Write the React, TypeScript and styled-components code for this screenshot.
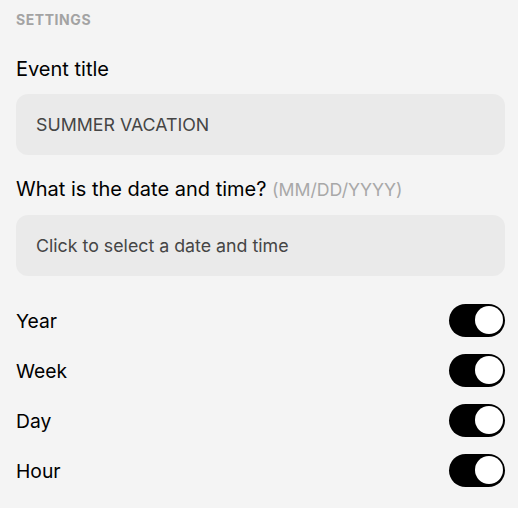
import React, { useState } from "react";
import styled, { createGlobalStyle } from "styled-components";

const Global = createGlobalStyle`
  html, body { margin: 0; padding: 0; background: #f4f4f4; }
  body { font-family: Inter, "Noto Sans", sans-serif; }
`;

const Panel = styled.div`
  padding: 11px 13px 16px 16px;
  display: flex;
  flex-direction: column;
`;

const Heading = styled.div`
  font-size: 14px;
  font-weight: 700;
  line-height: 18px;
  letter-spacing: 0.04em;
  color: #a3a3a3;
  margin-bottom: 27px;
`;

const Field = styled.div`
  display: flex;
  flex-direction: column;
  margin-bottom: 21px;
`;

const Label = styled.label`
  font-size: 20px;
  line-height: 26px;
  color: #000;
  margin-bottom: 12px;
`;

const Hint = styled.span`
  font-size: 17.7px;
  color: #a8a8a8;
`;

const InputBox = styled.div`
  height: 61px;
  box-sizing: border-box;
  border-radius: 12px;
  background: #eaeaea;
  display: flex;
  align-items: center;
  padding: 0 20px;
  font-size: 17.8px;
  color: #454545;
`;

const ToggleList = styled.div`
  display: flex;
  flex-direction: column;
  margin-top: -2px;
`;

const Row = styled.div`
  height: 50px;
  display: flex;
  align-items: center;
  justify-content: space-between;
  font-size: 19.3px;
  line-height: 24px;
  color: #000;
`;

const RowLabel = styled.span`
  padding-top: 1px;
`;

const Switch = styled.button<{ $on: boolean }>`
  width: 56px;
  height: 33px;
  border-radius: 17px;
  border: none;
  padding: 2px;
  background: ${(p) => (p.$on ? "#000" : "#ccc")};
  display: flex;
  align-items: center;
  justify-content: ${(p) => (p.$on ? "flex-end" : "flex-start")};
  cursor: pointer;
  box-sizing: border-box;
`;

const Knob = styled.span`
  width: 28px;
  height: 28px;
  border-radius: 50%;
  background: #fff;
  display: block;
`;

export default function App() {
  const [state, setState] = useState<Record<string, boolean>>({
    Year: true,
    Week: true,
    Day: true,
    Hour: true,
  });
  return (
    <>
      <Global />
      <Panel>
        <Heading>SETTINGS</Heading>
        <Field>
          <Label>Event title</Label>
          <InputBox>SUMMER VACATION</InputBox>
        </Field>
        <Field>
          <Label>
            What is the date and time? <Hint>(MM/DD/YYYY)</Hint>
          </Label>
          <InputBox>Click to select a date and time</InputBox>
        </Field>
        <ToggleList>
          {Object.keys(state).map((k) => (
            <Row key={k}>
              <RowLabel>{k}</RowLabel>
              <Switch
                $on={state[k]}
                onClick={() => setState({ ...state, [k]: !state[k] })}
              >
                <Knob />
              </Switch>
            </Row>
          ))}
        </ToggleList>
      </Panel>
    </>
  );
}
